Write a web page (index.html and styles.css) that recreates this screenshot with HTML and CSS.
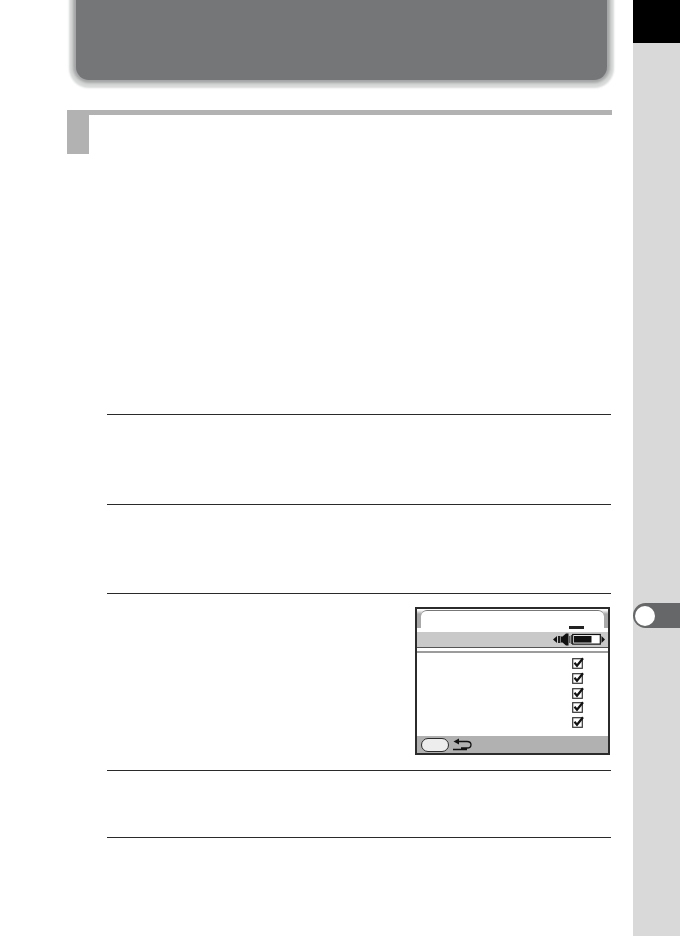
FILE: index.html
```html
<!DOCTYPE html>
<html lang="en">
<head>
<meta charset="utf-8">
<title>Page</title>
<link rel="stylesheet" href="styles.css">
</head>
<body>
<div class="page">
  <main class="main">
    <div class="banner"></div>
    <section class="section-head">
      <div class="head-square"></div>
      <div class="head-bar"></div>
    </section>
    <div class="steps">
      <div class="step step-1"></div>
      <div class="step step-2"></div>
      <div class="step step-3">
        <div class="screen">
          <div class="screen-tabs">
            <div class="screen-tab"><span class="tab-dash"></span></div>
          </div>
          <div class="screen-band">
            <svg class="band-icons" width="52" height="13" viewBox="0 0 52 13">
              <path d="M0 6.5 L4 3 V10 Z" fill="#111"/>
              <rect x="5" y="3" width="2.4" height="7" fill="#222"/>
              <path d="M8 3.5 H9.5 L13 0.5 H15.5 V12.5 H13 L9.5 9.5 H8 Z" fill="#111"/>
              <path d="M16.8 3 V10 M18.4 2 V11" stroke="#333" stroke-width="1" fill="none"/>
              <rect x="19.7" y="1.5" width="27.6" height="9.6" fill="#fff" stroke="#111" stroke-width="1.2"/>
              <rect x="21" y="3" width="17.5" height="6.6" fill="#111"/>
              <path d="M48.5 3 L52 6.5 L48.5 10 Z" fill="#111"/>
            </svg>
          </div>
          <div class="screen-rule"></div>
          <ul class="checks">
            <li class="check"><svg class="check-icon" width="12" height="12" viewBox="0 0 12 12"><rect x="0.7" y="1.7" width="9.6" height="9.6" fill="#fff" stroke="#333" stroke-width="1.2"/><path d="M2.5 5.8 L5 8.8 L11 1.2" fill="none" stroke="#111" stroke-width="2.2"/></svg></li>
            <li class="check"><svg class="check-icon" width="12" height="12" viewBox="0 0 12 12"><rect x="0.7" y="1.7" width="9.6" height="9.6" fill="#fff" stroke="#333" stroke-width="1.2"/><path d="M2.5 5.8 L5 8.8 L11 1.2" fill="none" stroke="#111" stroke-width="2.2"/></svg></li>
            <li class="check"><svg class="check-icon" width="12" height="12" viewBox="0 0 12 12"><rect x="0.7" y="1.7" width="9.6" height="9.6" fill="#fff" stroke="#333" stroke-width="1.2"/><path d="M2.5 5.8 L5 8.8 L11 1.2" fill="none" stroke="#111" stroke-width="2.2"/></svg></li>
            <li class="check"><svg class="check-icon" width="12" height="12" viewBox="0 0 12 12"><rect x="0.7" y="1.7" width="9.6" height="9.6" fill="#fff" stroke="#333" stroke-width="1.2"/><path d="M2.5 5.8 L5 8.8 L11 1.2" fill="none" stroke="#111" stroke-width="2.2"/></svg></li>
            <li class="check"><svg class="check-icon" width="12" height="12" viewBox="0 0 12 12"><rect x="0.7" y="1.7" width="9.6" height="9.6" fill="#fff" stroke="#333" stroke-width="1.2"/><path d="M2.5 5.8 L5 8.8 L11 1.2" fill="none" stroke="#111" stroke-width="2.2"/></svg></li>
          </ul>
          <div class="screen-foot">
            <span class="foot-pill"></span>
            <svg class="foot-back" width="19" height="13" viewBox="0 0 19 13">
              <path d="M0.5 3.5 L6 0.5 V6.5 Z" fill="#111"/>
              <path d="M5 3.5 H14 Q18 3.5 18 6.7 Q18 10 14 10 H8 M0 11.5 H14" fill="none" stroke="#111" stroke-width="1.3"/>
            </svg>
          </div>
        </div>
      </div>
      <div class="step step-4"></div>
      <div class="step step-5"></div>
    </div>
  </main>
  <aside class="side">
    <div class="side-black"></div>
    <div class="side-tab"><span class="side-dot"></span></div>
  </aside>
</div>
</body>
</html>
```
FILE: styles.css
```css
* { box-sizing: border-box; }
html, body { margin: 0; padding: 0; background: #fff; }
body { font-family: "Liberation Sans", sans-serif; overflow: hidden; }

.page { display: flex; width: 680px; height: 936px; }
.main { width: 633px; flex: none; }

.banner {
  width: 531px;
  height: 80px;
  margin-left: 76px;
  background: #757677;
  border-radius: 0 0 13px 13px;
  box-shadow: 0 0 3px 3px #a3a4a5, 0 1px 2px 7px #d8d9d9;
}

.section-head {
  display: flex;
  width: 545px;
  height: 44px;
  margin: 30px 0 0 67px;
}
.head-square { width: 22px; height: 44px; background: #b2b2b2; }
.head-bar { flex: 1; height: 5px; background: #b2b2b2; }

.steps { width: 504px; margin: 260px 0 0 107px; }
.step { border-top: 1px solid #2a2a2a; }
.step-1 { height: 90px; }
.step-2 { height: 89px; }
.step-3 { height: 177px; padding: 13px 0 0 308px; }
.step-4 { height: 67px; }
.step-5 { height: 1px; }

.screen {
  display: flex;
  flex-direction: column;
  width: 195px;
  height: 148px;
  border: 2px solid #2b2b2b;
  background: #fff;
}
.screen-tabs {
  height: 18px;
  margin-top: 1px;
  padding: 0 4px 0 4px;
  background: linear-gradient(#fff 0, #a9a9a9 4px);
}
.screen-tab {
  display: flex;
  justify-content: flex-end;
  height: 18px;
  padding: 15px 20px 0 0;
  background: #fff;
  border-top: 1px solid #777;
  border-radius: 6px 6px 0 0;
}
.tab-dash { width: 15px; height: 3px; background: #222; }
.screen-band {
  display: flex;
  justify-content: flex-end;
  align-items: center;
  height: 16px;
  margin-top: 4px;
  padding-right: 3px;
  background: #c9c9c9;
  border-bottom: 1px solid #555;
}
.band-icons { display: block; }
.screen-rule { height: 2px; margin-top: 3px; background: #9c9c9c; }
.checks {
  display: flex;
  flex-direction: column;
  gap: 2.8px;
  height: 83px;
  margin: 0;
  padding: 4px 0 0 155px;
  list-style: none;
}
.check { height: 12px; }
.check-icon { display: block; }
.screen-foot {
  display: flex;
  align-items: center;
  gap: 4px;
  flex: 1;
  padding-left: 4px;
  background: #b1b1b1;
}
.foot-pill {
  width: 28px;
  height: 14px;
  background: #ededed;
  border: 1.5px solid #2b2b2b;
  border-radius: 7px;
}
.foot-back { display: block; }

.side { flex: 1; background: #d9d9d9; }
.side-black { height: 43px; background: #000; }
.side-tab {
  display: flex;
  align-items: center;
  height: 25px;
  margin-top: 560px;
  padding-left: 2px;
  background: #666768;
  border-radius: 12.5px 0 0 12.5px;
}
.side-dot { width: 20px; height: 20px; background: #fff; border-radius: 50%; }
```
